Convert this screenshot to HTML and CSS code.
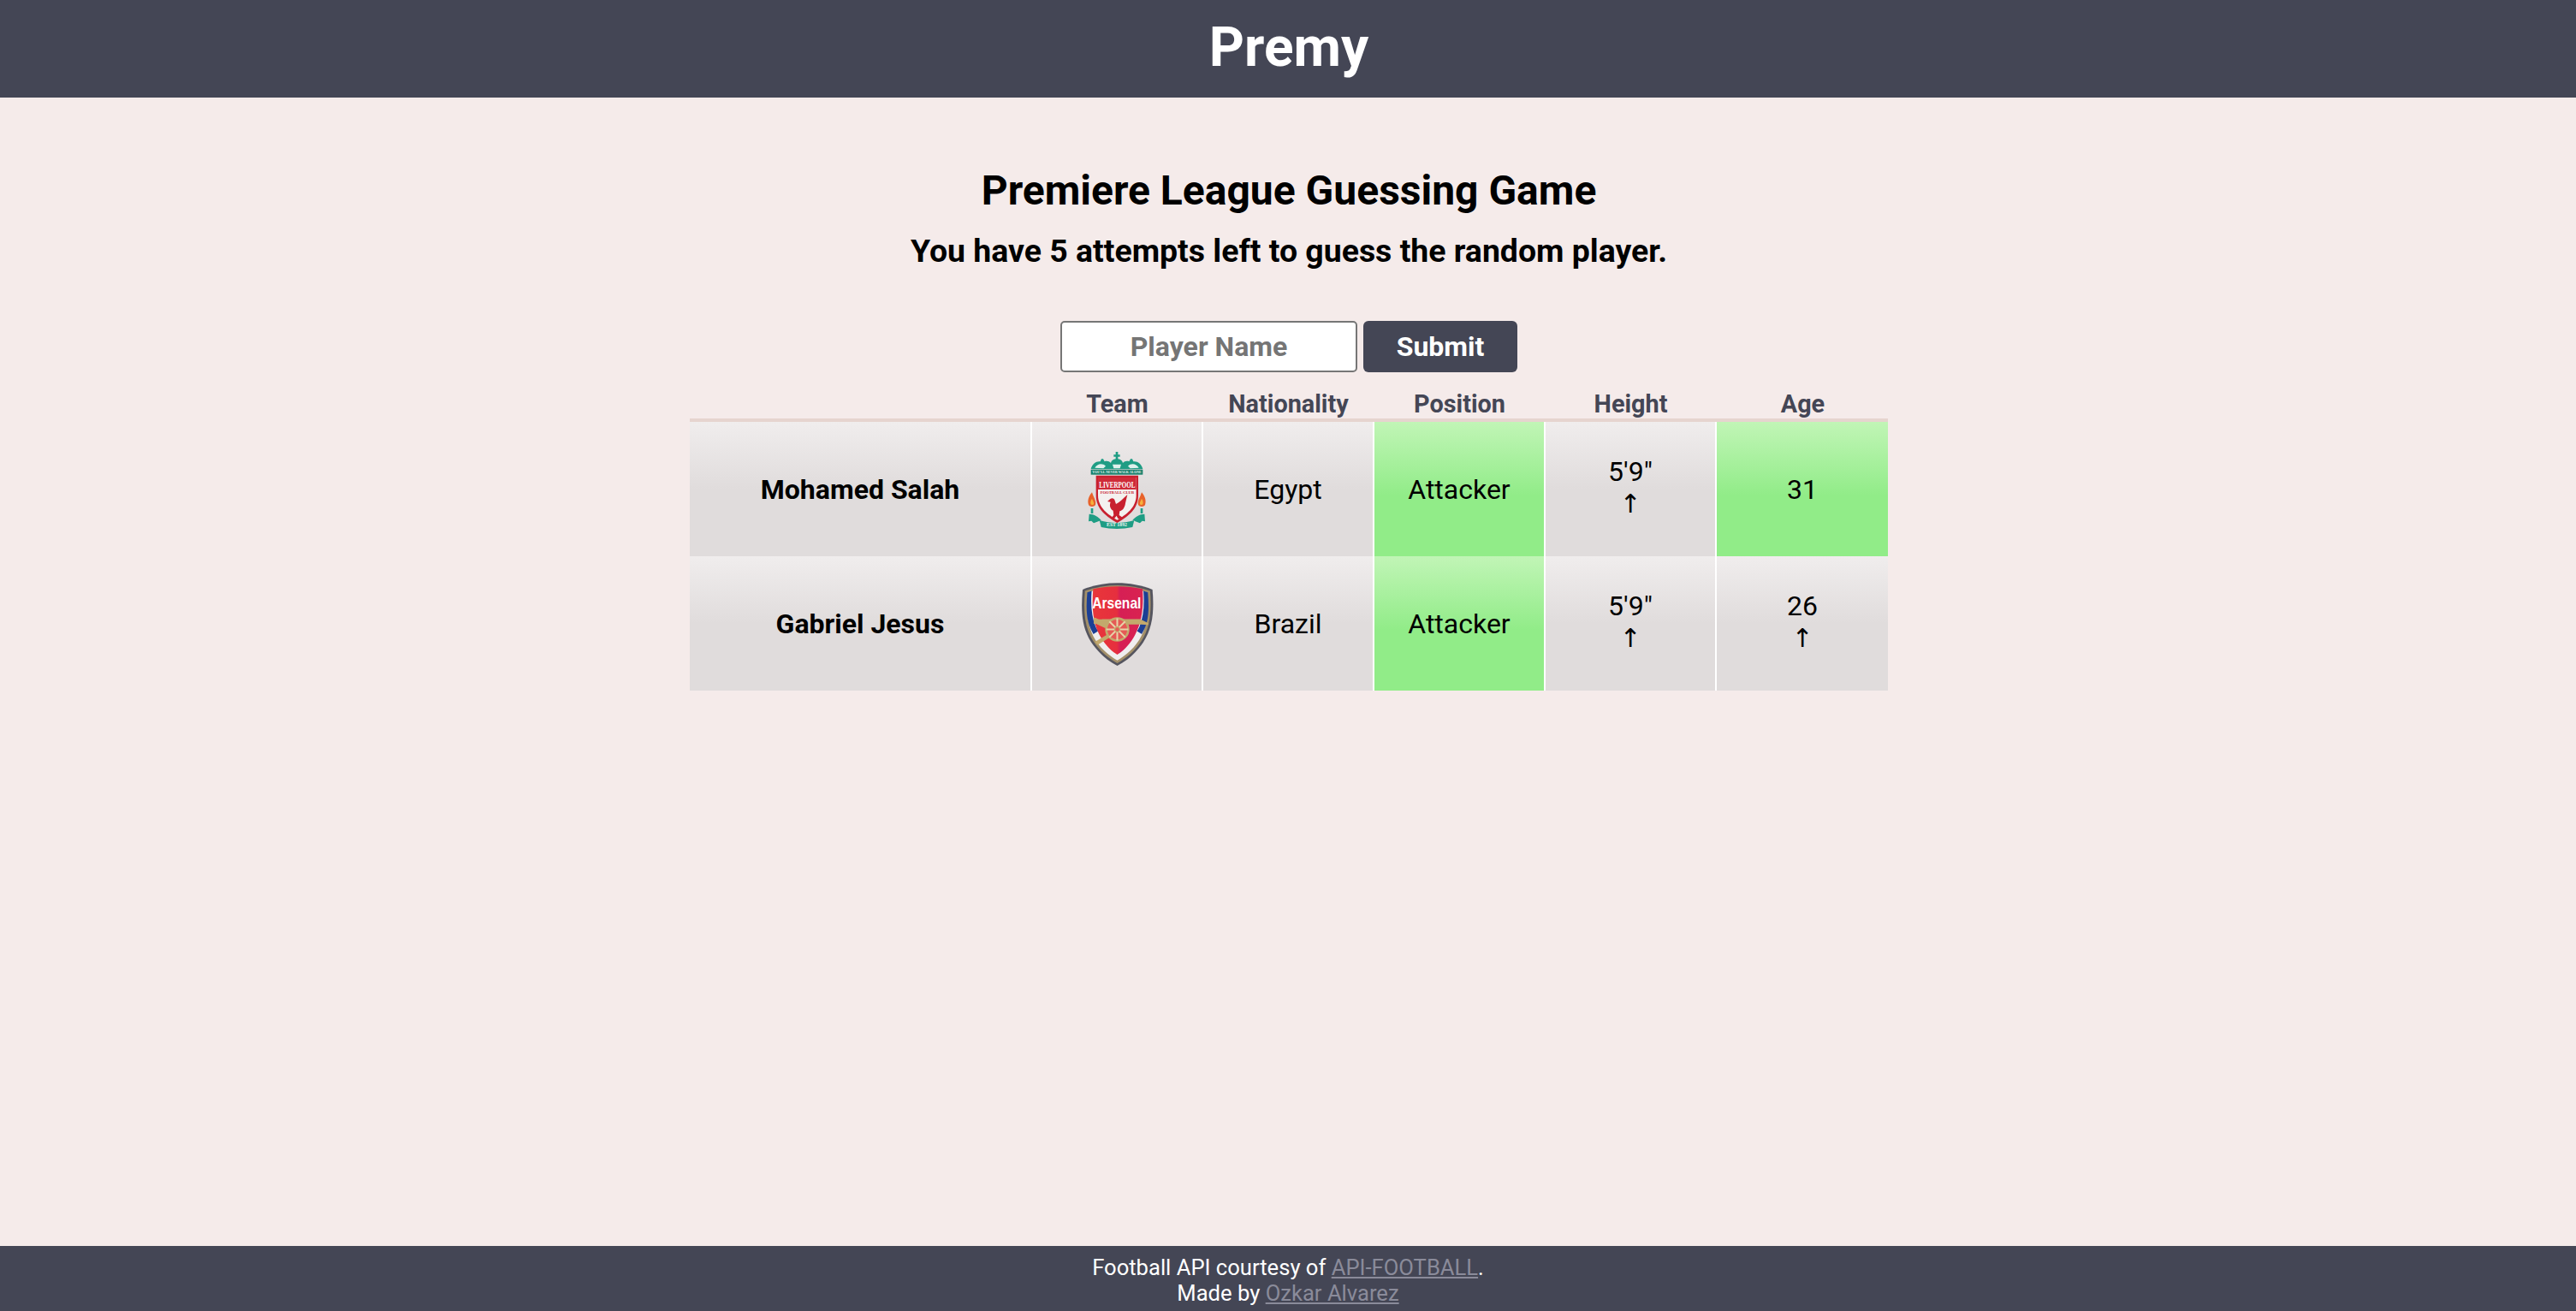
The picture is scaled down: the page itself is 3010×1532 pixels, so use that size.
FILE: index.html
```html
<!DOCTYPE html>
<html lang="en">
<head>
<meta charset="utf-8">
<title>Premy</title>
<link rel="stylesheet" href="styles.css">
</head>
<body>
<header class="topbar"><h1 class="brand">Premy</h1></header>
<main class="content">
  <h2 class="title">Premiere League Guessing Game</h2>
  <h3 class="subtitle">You have 5 attempts left to guess the random player.</h3>
  <form class="guess">
    <input class="guess-input" type="text" placeholder="Player Name">
    <button class="guess-btn" type="button">Submit</button>
  </form>
  <div class="board">
    <div class="row head">
      <div class="hcell"></div>
      <div class="hcell">Team</div>
      <div class="hcell">Nationality</div>
      <div class="hcell">Position</div>
      <div class="hcell">Height</div>
      <div class="hcell">Age</div>
    </div>
    <div class="row">
      <div class="cell name">Mohamed Salah</div>
      <div class="cell">
        <svg class="crest lfc" viewBox="90 45 210 270" aria-label="Liverpool">
          <path fill="#1f9d84" d="M191 48v10h-7v7h7v8c-9 1-15 6-17 14-6-6-14-8-22-5l-5-9h-6l-4 9c-14-2-28 8-33 26h182c-5-18-19-28-33-26l-4-9h-6l-5 9c-8-3-16-1-22 5-2-8-8-13-17-14v-8h7v-7h-7V48z"/>
          <path fill="#dff1ec" d="M118 104c8-14 26-18 38-6l-8 8zM272 104c-8-14-26-18-38-6l8 8zM180 92h30l-4 14h-22z"/>
          <rect x="104" y="110" width="182" height="18" fill="#17806c"/>
          <text x="195" y="123" class="crest-motto" textLength="172" lengthAdjust="spacingAndGlyphs">YOU'LL NEVER WALK ALONE</text>
          <path fill="#c8202f" d="M122 131h148v70c0 50-40 76-74 96-34-20-74-46-74-96z"/>
          <path fill="#f4f1ef" d="M129 138h134v62c0 44-36 68-67 87-31-19-67-43-67-87z"/>
          <rect x="129" y="138" width="134" height="42" fill="#cf2b38"/>
          <text x="196" y="175" class="crest-name" textLength="126" lengthAdjust="spacingAndGlyphs">LIVERPOOL</text>
          <text x="196" y="194" class="crest-sub" textLength="118" lengthAdjust="spacingAndGlyphs">FOOTBALL CLUB</text>
          <path fill="#c8202f" d="M232 198l-7 30c-2 16-10 26-20 28l-2 14 12 8v4h-16l-5-10-8 10h-12l10-12-2-16c-10-6-14-18-9-30l-11-2 10-9c7-5 14-2 16 6l4 12c12-6 24-18 40-33z"/>
          <path fill="#e8622a" d="M108 190c-14 16-16 32-12 44 3 8 20 8 24 0 4-14-6-24-12-44zM282 190c14 16 16 32 12 44-3 8-20 8-24 0-4-14 6-24 12-44z"/>
          <path fill="#f6b23c" d="M108 212c-5 7-6 14-4 20 2 3 8 3 10 0 2-6-3-12-6-20zM282 212c5 7 6 14 4 20-2 3-8 3-10 0-2-6 3-12 6-20z"/>
          <path fill="#1f9d84" d="M104 246h8v18h-8zM278 246h8v18h-8z"/>
          <path fill="#1f9d84" d="M98 266c18 0 32 10 42 22l-26 10-8-8-10 2zM292 266c-18 0-32 10-42 22l26 10 8-8 10 2zM134 288c40 12 82 12 122 0l-6 24c-36 8-74 8-110 0z"/>
          <text x="195" y="309" class="crest-est" textLength="72" lengthAdjust="spacingAndGlyphs">EST 1892</text>
        </svg>
      </div>
      <div class="cell">Egypt</div>
      <div class="cell hit">Attacker</div>
      <div class="cell stack"><span>5'9"</span><span class="arrow">↑</span></div>
      <div class="cell hit">31</div>
    </div>
    <div class="row">
      <div class="cell name">Gabriel Jesus</div>
      <div class="cell">
        <svg class="crest afc" viewBox="70 32 250 288" aria-label="Arsenal">
          <defs>
            <linearGradient id="ars" x1="0" x2="1" y1="0" y2="0">
              <stop offset="0" stop-color="#e8363a"/>
              <stop offset="0.48" stop-color="#e62f3e"/>
              <stop offset="0.55" stop-color="#d61f55"/>
              <stop offset="1" stop-color="#d92350"/>
            </linearGradient>
          </defs>
          <path fill="#55555f" d="M76 58c74-30 164-30 240 0 6 72 2 130-32 182-22 32-50 60-89 80-39-20-67-48-89-80C72 188 70 130 76 58z"/>
          <path fill="#a3906a" d="M84 63c70-26 154-26 224 0 5 66 1 124-30 172-20 30-46 56-83 76-37-20-63-46-83-76C81 187 79 129 84 63z"/>
          <path fill="#f0eeee" d="M94 68c66-24 140-24 204 0 5 62 1 116-28 164-18 28-42 50-75 70-33-20-57-42-75-70C91 184 89 130 94 68z"/>
          <path fill="#1c3f94" d="M92 68l15-5c-4 50 0 88 14 124l8 14-16 10C88 172 87 126 92 68zM300 68l-15-5c4 50 0 88-14 124l-8 14 16 10c25-39 26-85 21-143z"/>
          <path fill="url(#ars)" d="M112 56c54-12 114-12 170 0 4 56-1 112-26 158-16 30-36 52-61 68-25-16-45-38-61-68-25-46-26-102-22-158z"/>
          <text x="193" y="122" class="ars-name" textLength="168" lengthAdjust="spacingAndGlyphs">Arsenal</text>
          <path fill="#c3a96c" d="M114 154l8 2c8 4 14 6 22 4h130l28 14v6l-26-2h-46v12h-78l-30-14h-8z"/>
          <path fill="#c3a96c" d="M118 238l44-26 8 10-42 26z"/>
          <circle cx="195" cy="195" r="38" fill="#e55a55" stroke="#c3a96c" stroke-width="8"/>
          <circle cx="195" cy="195" r="9" fill="#e55a55" stroke="#c3a96c" stroke-width="5"/>
          <path stroke="#e6d3a8" stroke-width="6" d="M195 157v28M195 205v28M157 195h28M205 195h28M168 168l20 20M202 202l20 20M222 168l-20 20M188 202l-20 20"/>
        </svg>
      </div>
      <div class="cell">Brazil</div>
      <div class="cell hit">Attacker</div>
      <div class="cell stack"><span>5'9"</span><span class="arrow">↑</span></div>
      <div class="cell stack"><span>26</span><span class="arrow">↑</span></div>
    </div>
  </div>
</main>
<footer class="foot">
  <div>Football API courtesy of <a href="#">API-FOOTBALL</a>.</div>
  <div>Made by <a href="#">Ozkar Alvarez</a></div>
</footer>
</body>
</html>
```
FILE: styles.css
```css
* { box-sizing: border-box; }
html, body { margin: 0; height: 100%; }
body {
  display: flex;
  flex-direction: column;
  min-height: 1532px;
  background: #f5ebea;
  color: #000;
  font-family: Roboto, "Liberation Sans", sans-serif;
}
.topbar {
  height: 114px;
  padding-left: 2px;
  background: #444655;
  display: flex;
  align-items: center;
  justify-content: center;
}
.brand { margin: 0 0 3px; color: #fff; font-size: 64px; font-weight: 700; line-height: 1; }
.content {
  flex: 1;
  display: flex;
  flex-direction: column;
  align-items: center;
  padding: 81px 0 0 2px;
}
.title { margin: 0; font-size: 48px; font-weight: 700; line-height: 56px; }
.subtitle { margin: 20px 0 0; font-size: 37.44px; font-weight: 700; line-height: 44px; }
.guess { display: flex; gap: 7px; margin-top: 60px; }
.guess-input {
  width: 347px;
  height: 60px;
  border: 2px solid #767676;
  border-radius: 5px;
  background: #fff;
  text-align: center;
  font: 700 32px Roboto, sans-serif;
  padding: 0;
}
.guess-input::placeholder { color: #757575; opacity: 1; }
.guess-btn {
  width: 180px;
  height: 60px;
  border: 0;
  border-radius: 6px;
  background: #444655;
  color: #fff;
  font: 700 32px Roboto, sans-serif;
  padding: 0;
}
.board { width: 1400px; margin-top: 20px; }
.row { display: grid; grid-template-columns: 398px repeat(4, 200px) 202px; }
.head { height: 38px; border-bottom: 4px solid #e6d4cf; }
.hcell {
  border-left: 2px solid transparent;
  padding-left: 1px;
  color: #444655;
  font-size: 28.8px;
  font-weight: 700;
  line-height: 34px;
  text-align: center;
}
.cell {
  height: 157px;
  display: flex;
  align-items: center;
  justify-content: center;
  font-size: 32px;
  background: linear-gradient(#f0eded, #e0dcdc 50%);
  border-left: 2px solid #fff;
}
.cell:first-child { border-left: 0; }
.name { font-weight: 700; }
.hit { background: linear-gradient(#c1f5b6, #91ec88 55%); }
.stack { flex-direction: column; line-height: 38px; padding-bottom: 3px; }
.arrow { font-family: "DejaVu Sans", sans-serif; font-size: 30px; line-height: 38px; }
.crest { display: block; overflow: visible; }
.lfc { width: 70px; height: 92px; }
.afc { width: 85px; height: 98px; }
.crest-motto { font: 700 14px "Liberation Serif", serif; fill: #e8f5f1; text-anchor: middle; }
.crest-name { font: 700 32px "Liberation Serif", serif; fill: #fff; text-anchor: middle; }
.crest-sub { font: 700 14px "Liberation Serif", serif; fill: #c8202f; text-anchor: middle; }
.crest-est { font: 700 16px "Liberation Serif", serif; fill: #e8f5f1; text-anchor: middle; }
.ars-name { font: 700 54px "Liberation Sans", sans-serif; fill: #fff; text-anchor: middle; }
.foot {
  height: 76px;
  background: #444655;
  color: #fff;
  text-align: center;
  font-size: 25.6px;
  line-height: 30px;
  padding-top: 10px;
}
.foot a { color: #8a8b9a; }
```
